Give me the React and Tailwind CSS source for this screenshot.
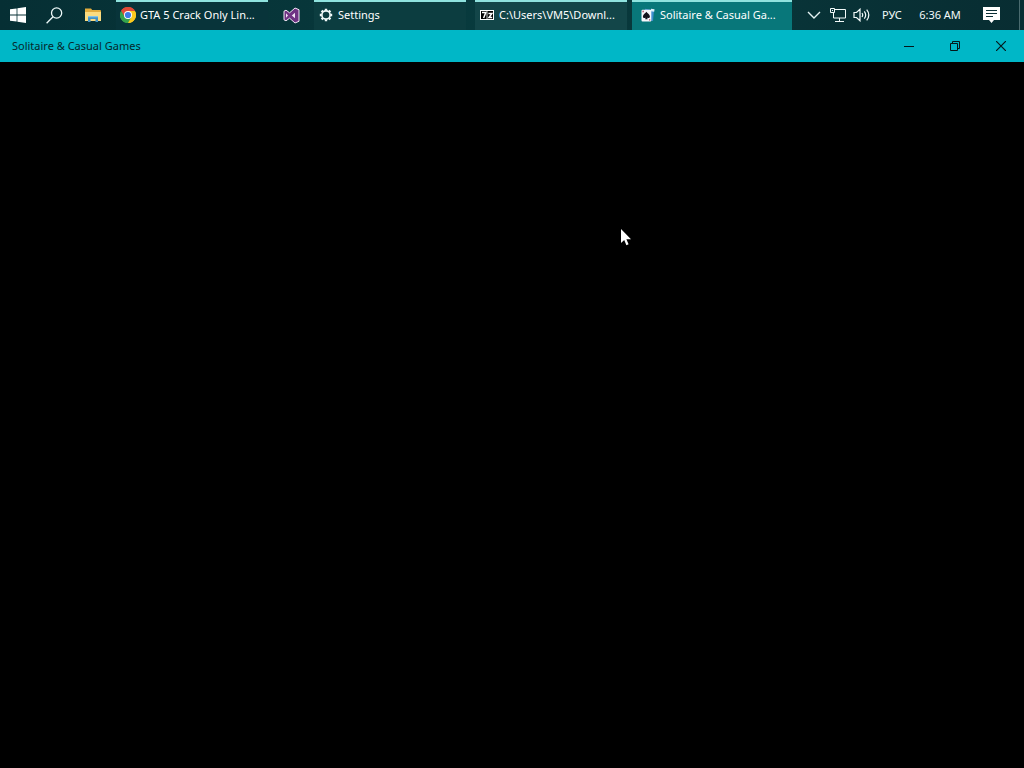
import clsx from 'clsx'

const StartIcon = () => (
  <svg width="16" height="16" viewBox="0 0 16 16" fill="#fff">
    <path d="M0 2.3 6.6 1.4v6.1H0zM7.4 1.3 16 0v7.5H7.4zM0 8.4h6.6v6.2L0 13.7zM7.4 8.4H16V16l-8.6-1.3z" />
  </svg>
)

const SearchIcon = () => (
  <svg width="17" height="17" viewBox="0 0 17 17" fill="none" stroke="#eefafa" strokeWidth="1.3">
    <circle cx="10.6" cy="6" r="5.1" />
    <path d="M7 9.7.6 16.2" />
  </svg>
)

const ExplorerIcon = () => (
  <svg width="18" height="16" viewBox="0 0 18 16">
    <path d="M1 1.5h6l1.2 1.6H16a1 1 0 0 1 1 1V14H1z" fill="#e3ad3d" />
    <path d="M1 5h16v9H1z" fill="#fbdc80" />
    <path d="M4 15V9.5h10V15h-2.5v-3h-5v3z" fill="#4291c4" />
    <path d="M4 9h10v1.3H4z" fill="#82c4e6" />
  </svg>
)

const ChromeIcon = () => (
  <svg width="16" height="16" viewBox="0 0 16 16">
    <path d="M8 8 1.07 4A8 8 0 0 1 14.93 4z" fill="#e04a38" />
    <path d="M8 8 14.93 4A8 8 0 0 1 8 16z" fill="#fbc91e" />
    <path d="M8 8v8A8 8 0 0 1 1.07 4z" fill="#35a34c" />
    <path d="M8 4h6.93A8 8 0 0 1 8 16l3.5-6z" fill="#fbc91e" />
    <path d="M1.07 4 4.6 10 8 8V4h6.93A8 8 0 0 0 1.07 4z" fill="#e04a38" />
    <path d="M1.07 4 4.6 10 8 12l3.4-2L8 16A8 8 0 0 1 1.07 4z" fill="#35a34c" />
    <circle cx="8" cy="8" r="4" fill="#fff" />
    <circle cx="8" cy="8" r="3.1" fill="#3e7be6" />
  </svg>
)

const VisualStudioIcon = () => (
  <svg width="17" height="17" viewBox="0 0 17 17">
    <path
      d="M1 4.2 3 3.2l3.6 2.6L12 1l4 1.7v11.6L12 16l-5.4-4.8L3 13.8l-2-1z"
      fill="#6f3384"
      stroke="#f0e4f4"
    />
    <path d="M3 6.2v4.6l2-2.3zM12 5.8 8.8 8.5 12 11.2z" fill="#f0e4f4" />
  </svg>
)

const GearIcon = () => (
  <svg width="14" height="14" viewBox="0 0 14 14" fill="none" stroke="#f2fafa">
    <circle cx="7" cy="7" r="4.1" strokeWidth="1.6" />
    <path
      d="M7 .8v2M7 11.2v2M.8 7h2M11.2 7h2M2.6 2.6l1.4 1.4M10 10l1.4 1.4M2.6 11.4 4 10M10 4l1.4-1.4"
      strokeWidth="2.4"
    />
  </svg>
)

const SevenZipIcon = () => (
  <svg width="14" height="10" viewBox="0 0 14 10">
    <path d="M0 0h14v10H0z" fill="#fff" />
    <path d="M1 1h12v8H1z" fill="#000" />
    <path d="M2 2.5h3.8L3.6 8M8.4 3.6h3.4L9 7.5h3.2" fill="none" stroke="#fff" strokeWidth="1.5" />
    <path d="M7 1v8" stroke="#fff" strokeWidth=".8" />
  </svg>
)

const SolitaireIcon = () => (
  <svg width="14" height="14" viewBox="0 0 14 14">
    <path d="m4 .8 9 1.4-1 10.8-6-.5z" fill="#3f8fd0" />
    <path d="m10 .8 3.5.5-.3 2.4-3.2-.4z" fill="#d8f0fb" />
    <rect x=".5" y="1.8" width="9.8" height="11.6" rx="1" fill="#f7f7fb" />
    <path
      d="M5.4 3.8C6 5.2 8.9 6.4 8.9 8.4c0 1.6-1.9 2.1-2.8 1l.6 1.9H4.1l.6-1.9c-.9 1.1-2.8.6-2.8-1 0-2 2.9-3.2 3.5-4.6z"
      fill="#15131c"
    />
    <path d="M1.5 2.8h1.3v1.4H1.5zM8 11.2h1.3v1.3H8z" fill="#b8445c" />
  </svg>
)

const ChevronIcon = () => (
  <svg width="14" height="8" viewBox="0 0 14 8" fill="none" stroke="#e6f4f4" strokeWidth="1.4">
    <path d="m1 1 6 6 6-6" />
  </svg>
)

const NetworkIcon = () => (
  <svg width="16" height="14" viewBox="0 0 16 14" fill="none" stroke="#f2fafa">
    <path d="M4.5 1.5h11v8.5h-12V5M.5.5h4v4h-4zM9.5 10v3M5 13.5h9M2.5 2v1" />
  </svg>
)

const VolumeIcon = () => (
  <svg width="18" height="14" viewBox="0 0 18 14" fill="none" stroke="#f2fafa" strokeWidth="1.2">
    <path d="M1 4.5h2.5L7 1.2v11.6L3.5 9.5H1zM9 5q1.4 2 0 4M11.3 3.3q2.8 3.7 0 7.4M13.7 1.6q4.2 5.4 0 10.8" />
  </svg>
)

const ActionCenterIcon = () => (
  <svg width="17" height="16" viewBox="0 0 17 16">
    <path d="M0 0h17v13h-6l-2.5 3L6 13H0z" fill="#fff" />
    <path d="M3 3.5h11M3 6.5h11M3 9.5h7" stroke="#0b3036" />
  </svg>
)

const MinimizeIcon = () => (
  <svg width="10" height="10" viewBox="0 0 10 10" stroke="#04181b">
    <path d="M0 5.5h10" />
  </svg>
)

const RestoreIcon = () => (
  <svg width="10" height="10" viewBox="0 0 10 10" fill="none" stroke="#04181b">
    <path d="M.5 2.5h7v7h-7zM2.5 2.5v-2h7v7h-2" />
  </svg>
)

const CloseIcon = () => (
  <svg width="10" height="10" viewBox="0 0 10 10" stroke="#04181b" strokeWidth="1.2">
    <path d="m0 0 10 10M10 0 0 10" />
  </svg>
)

function IconButton({ label, className, children }) {
  return (
    <button aria-label={label} className={clsx('flex h-full shrink-0 items-center justify-center', className)}>
      {children}
    </button>
  )
}

function Task({ title, icon, className }) {
  return (
    <button
      className={clsx('flex h-full shrink-0 items-center gap-1 border-t-2 border-[#8fe3df] pb-[2px] text-white', className)}
    >
      <span className="flex w-4 shrink-0 justify-center">{icon}</span>
      <span className="whitespace-nowrap">{title}</span>
    </button>
  )
}

export default function App() {
  return (
    <div className="relative flex min-h-screen flex-col bg-black font-['Noto_Sans',sans-serif] text-[11px] leading-4">
      {/* Taskbar */}
      <nav className="flex h-[30px] shrink-0 items-center bg-linear-to-r from-[#062f34] via-[#083b3e] to-[#082d32] text-[#f2fafa]">
        <IconButton label="Start" className="w-9"><StartIcon /></IconButton>
        <IconButton label="Search" className="w-9"><SearchIcon /></IconButton>
        <IconButton label="File Explorer" className="mr-[2px] w-[42px]"><ExplorerIcon /></IconButton>
        <Task title="GTA 5 Crack Only Lin..." icon={<ChromeIcon />} className="w-[152px] bg-[#08343a] pl-1" />
        <IconButton label="Visual Studio" className="w-[46px]"><VisualStudioIcon /></IconButton>
        <Task title="Settings" icon={<GearIcon />} className="mr-[9px] w-[152px] bg-[#0c3d40] pl-1" />
        <Task title="C:\Users\VM5\Downl..." icon={<SevenZipIcon />} className="mr-[5px] w-[152px] bg-[#134649] pl-1" />
        <Task title="Solitaire & Casual Ga..." icon={<SolitaireIcon />} className="w-40 bg-[#08777a] pl-2" />

        {/* Tray */}
        <div className="ml-auto flex h-full items-center">
          <IconButton label="Show hidden icons" className="w-6"><ChevronIcon /></IconButton>
          <IconButton label="Network" className="w-6"><NetworkIcon /></IconButton>
          <IconButton label="Volume" className="w-6"><VolumeIcon /></IconButton>
          <button className="h-full w-9">РУС</button>
          <button className="h-full w-[60px] whitespace-nowrap">6:36 AM</button>
          <IconButton label="Notifications" className="w-[42px]"><ActionCenterIcon /></IconButton>
          <button aria-label="Show desktop" className="ml-[7px] h-full w-[5px] border-l border-[#4a6b6f]" />
        </div>
      </nav>

      {/* App window */}
      <header className="flex h-8 shrink-0 items-center bg-[#00b7c7] text-[#06272b]">
        <h1 className="pl-3">Solitaire &amp; Casual Games</h1>
        <div className="ml-auto flex h-full">
          <IconButton label="Minimize" className="w-[46px]"><MinimizeIcon /></IconButton>
          <IconButton label="Restore" className="w-[46px]"><RestoreIcon /></IconButton>
          <IconButton label="Close" className="w-[46px]"><CloseIcon /></IconButton>
        </div>
      </header>
      <main className="flex-1 bg-black" />

      {/* Mouse pointer */}
      <svg className="absolute top-[229px] left-[621px]" width="12" height="18" viewBox="0 0 12 18" fill="#fff">
        <path d="M0 0v14l3.2-3 2.2 5.2 2.2-1L5.4 10.2H10z" />
      </svg>
    </div>
  )
}
